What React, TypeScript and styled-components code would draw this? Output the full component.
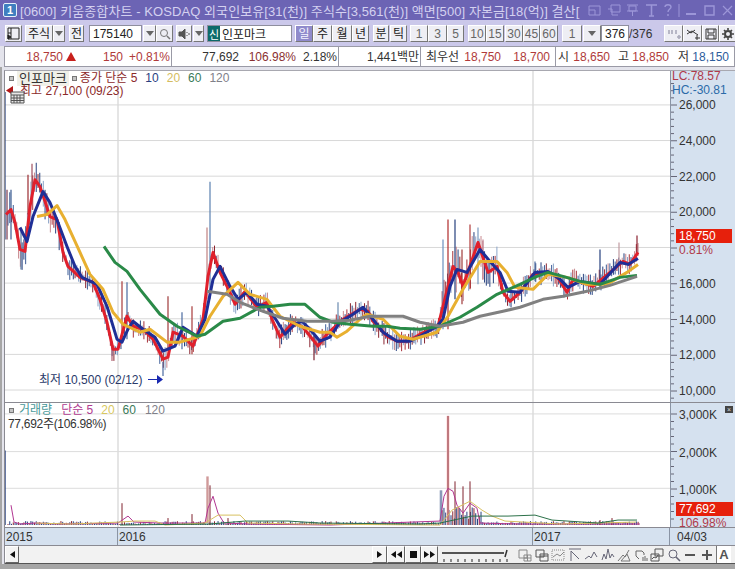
import React from "react"
import styled, { createGlobalStyle } from "styled-components"

const SANS = `"Liberation Sans", "Noto Sans CJK KR", sans-serif`

type Pt = [number, number]

const RED: Pt[] = [[6,215],[11,210],[15,223],[20,250],[25,252],[30,207],[35,180],[40,187],[50,217],[57,220],[63,253],[68,267],[80,278],[93,283],[100,300],[107,323],[113,350],[118,350],[127,317],[133,327],[143,330],[153,340],[163,360],[168,358],[173,333],[183,337],[193,347],[203,320],[208,277],[213,253],[220,273],[230,293],[235,305],[245,292],[257,308],[267,303],[272,320],[280,338],[293,323],[303,328],[318,347],[327,335],[343,320],[360,310],[368,312],[373,322],[387,337],[397,342],[408,342],[420,335],[438,327],[443,307],[453,267],[458,273],[463,287],[478,243],[488,273],[497,267],[503,293],[510,302],[520,293],[533,275],[547,273],[557,277],[567,293],[573,280],[593,287],[610,273],[623,262],[630,265],[638,253]]
const BLUE: Pt[] = [[20,228],[27,242],[33,217],[43,192],[50,203],[58,223],[67,247],[75,267],[82,278],[97,285],[107,307],[117,340],[122,343],[128,330],[133,322],[143,330],[155,338],[163,352],[175,347],[183,328],[197,337],[205,320],[213,280],[220,267],[230,287],[238,300],[247,293],[257,305],[267,307],[277,322],[285,335],[295,325],[302,322],[310,330],[320,342],[330,338],[340,323],[353,315],[363,308],[373,320],[383,333],[397,342],[410,342],[420,337],[437,327],[443,320],[450,287],[457,270],[467,273],[480,250],[490,262],[500,273],[508,292],[520,293],[535,273],[548,272],[560,280],[568,288],[580,282],[600,285],[620,263],[628,265],[638,259]]
const YELLOW: Pt[] = [[37,217],[47,215],[57,206],[65,220],[80,253],[90,275],[103,290],[113,313],[123,325],[140,333],[150,330],[167,343],[180,343],[200,337],[210,317],[223,297],[238,283],[250,295],[267,300],[280,317],[300,327],[320,333],[330,333],[337,338],[347,332],[360,320],[367,315],[383,320],[400,337],[413,340],[420,338],[437,333],[448,317],[463,290],[480,262],[497,262],[507,273],[515,288],[533,290],[548,275],[567,278],[587,285],[607,285],[627,273],[638,265]]
const GREEN: Pt[] = [[104,247],[115,263],[127,272],[140,290],[160,315],[177,327],[197,337],[205,335],[223,322],[240,319],[260,308],[273,307],[290,305],[305,305],[320,318],[333,323],[350,325],[373,327],[387,327],[400,329],[420,330],[440,327],[460,318],[477,308],[497,295],[520,285],[537,277],[548,273],[563,277],[580,282],[600,285],[620,278],[637,276]]
const GRAY: Pt[] = [[207,292],[227,295],[240,303],[263,312],[283,319],[307,322],[330,322],[350,321],[370,317],[403,317],[420,323],[440,327],[463,323],[480,317],[503,312],[520,308],[543,300],[563,297],[587,292],[610,286],[637,277]]

const SPIKES: [number, number, number, string][] = [
  [5,92,240,"#26407e"],[7,190,240,"#7a3a50"],[11,190,240,"#3a5a90"],[32,164,200,"#a05060"],[28,175,215,"#9a2a30"],[21,232,270,"#5a7aa0"],
  [122,282,340,"#a83a3a"],[127,283,340,"#4a6aa0"],[168,297,350,"#a03a3a"],[192,307,355,"#a83a3a"],[182,313,350,"#4a6aa0"],[163,363,377,"#4a6aa0"],
  [112,345,362,"#b06070"],[210,182,300,"#5a80b0"],[207,228,300,"#c08080"],[314,337,361,"#7a2030"],[338,303,325,"#6a8ab0"],
  [443,240,330,"#6a90c0"],[448,220,330,"#b02a2a"],[455,220,300,"#26407e"],[462,250,305,"#a03a3a"],[470,225,290,"#b03a3a"],[478,228,285,"#7a9ac0"],[483,240,280,"#c08090"],
  [535,262,282,"#4a6aa0"],[600,250,290,"#26407e"],[619,243,265,"#c09aa0"],[637,236,255,"#8a2030"],
]

const at = (line: Pt[], x: number) => {
  for (let i = 1; i < line.length; i++) {
    if (x <= line[i][0]) {
      const [a, b] = [line[i - 1], line[i]]
      return a[1] + ((b[1] - a[1]) * (x - a[0])) / (b[0] - a[0] || 1)
    }
  }
  return line[line.length - 1][1]
}
const rnd = (i: number) => {
  const v = Math.sin(i * 12.9898) * 43758.5453
  return v - Math.floor(v)
}
const pts = (line: Pt[]) => line.map(p => p.join(",")).join(" ")

const WICK_COLORS = ["#a83038", "#3c5c98", "#c88a90", "#8aa4c8", "#8a2430", "#26407e"]
const wicks = Array.from({ length: 358 }, (_, i) => {
  const x = 8 + i * 1.765
  const y = at(RED, x)
  const amp = x > 440 && x < 500 ? 22 : x < 60 ? 18 : 10
  return {
    x,
    y1: y - 2 - rnd(i) * amp,
    y2: y + 2 + rnd(i + 500) * amp,
    c: WICK_COLORS[Math.floor(rnd(i + 900) * 6)],
  }
})
const volBars = Array.from({ length: 358 }, (_, i) => {
  const x = 8 + i * 1.765
  const tall = x > 441 && x < 482
  return {
    x,
    top: 527 - (tall ? 6 + rnd(i) * 12 : 1 + rnd(i) * 3),
    c: i % 3 === 0 ? "#8a2430" : "#26407e",
  }
})

const PRICES = [26000, 24000, 22000, 20000, 18000, 16000, 14000, 12000, 10000]
const priceY = (p: number) => 105 + ((26000 - p) * 35.75) / 2000

const GlobalStyle = createGlobalStyle`
  html, body { margin: 0; padding: 0; background: #a8a8a8; overflow: hidden; }
  * { box-sizing: border-box; }
`

const Page = styled.div`
  width: 735px;
  height: 569px;
  display: flex;
  flex-direction: column;
  font-family: ${SANS};
  background: #e4e4ec;
  border-bottom: 5px solid #a6a6a6;
  overflow: hidden;
`
const TitleBar = styled.div`
  height: 20px;
  background: #6c64b4;
  display: flex;
  align-items: center;
  padding-left: 3px;
  color: #d4d1f0;
  font-size: 13px;
  flex: none;
`
const AppBadge = styled.div`
  width: 14px;
  height: 14px;
  background: #3f7fc0;
  border: 1px solid #e6f0fa;
  border-radius: 2px;
  color: #fff;
  font: bold 11px ${SANS};
  line-height: 12px;
  text-align: center;
  margin-right: 3px;
`
const TitleText = styled.div`
  width: 566px;
  white-space: nowrap;
  overflow: hidden;
  letter-spacing: 0.08px;
`
const TitleIcons = styled.div`
  display: flex;
  align-items: center;
  gap: 4px;
  margin-left: 4px;
`
const Toolbar = styled.div`
  height: 26px;
  background: #cbc8ea;
  display: flex;
  align-items: center;
  padding: 1px 0 0 5px;
  font-size: 12px;
  color: #222;
  flex: none;
`
const Btn = styled.div<{ $w: number; $ml?: number; $active?: boolean; $dim?: boolean }>`
  width: ${p => p.$w}px;
  height: 17px;
  margin-left: ${p => p.$ml ?? 0}px;
  flex: none;
  display: flex;
  align-items: center;
  justify-content: center;
  background: ${p => (p.$active ? "#8f8acb" : "#eeeef4")};
  color: ${p => (p.$active ? "#f4f4ff" : p.$dim ? "#666" : "#222")};
  border: 1px solid #fff;
  border-right-color: #777;
  border-bottom-color: #777;
  font-size: 12px;
  line-height: 1;
`
const Field = styled.div<{ $w: number; $ml?: number }>`
  width: ${p => p.$w}px;
  height: 17px;
  margin-left: ${p => p.$ml ?? 0}px;
  flex: none;
  display: flex;
  align-items: center;
  background: #fff;
  border: 1px solid #8e8e9e;
  padding-left: 3px;
  font-size: 12px;
  color: #222;
  overflow: hidden;
`
const NewBadge = styled.span`
  width: 12px;
  height: 15px;
  margin: 0 2px 0 -3px;
  background: #0c6a6a;
  color: #fff;
  font-size: 11px;
  display: flex;
  align-items: center;
  justify-content: center;
`
const TotalText = styled.span`
  width: 26px;
  flex: none;
  color: #333;
  font-size: 12px;
`
const InfoRow = styled.div`
  height: 21px;
  background: #fff;
  border: 1px solid #9a9aa6;
  margin-left: 4px;
  display: flex;
  align-items: center;
  font-size: 12px;
  flex: none;
`
const InfoCell = styled.div<{ $w: number; $c?: string; $sep?: boolean }>`
  width: ${p => p.$w}px;
  height: 100%;
  flex: none;
  line-height: 20px;
  text-align: right;
  color: ${p => p.$c ?? "#333"};
  white-space: nowrap;
  border-right: ${p => (p.$sep ? "1px solid #9a9aa6" : "none")};
`
const Content = styled.div`
  flex: 1;
  min-height: 0;
  display: flex;
  border-left: 2px solid #a6a6a6;
  padding: 3px 0 0 2px;
`
const Panels = styled.div`
  flex: 1;
  display: flex;
  flex-direction: column;
  border-left: 1px solid #8a8a92;
  border-top: 1px solid #a8a8b0;
  background: #fff;
  min-width: 0;
`
const ChartRow = styled.div<{ $h: number }>`
  height: ${p => p.$h}px;
  display: flex;
  flex: none;
  border-bottom: 1px solid #8a8a92;
`
const Plot = styled.div`
  position: relative;
  width: 665px;
  flex: none;
`
const ChartSvg = styled.svg`
  display: block;
  width: 100%;
  height: 100%;
`
const Legend = styled.div`
  position: absolute;
  left: 1px;
  top: 0;
  height: 14px;
  display: flex;
  align-items: center;
  font-size: 12px;
  line-height: 14px;
  white-space: nowrap;
`
const LegendBox = styled.span`
  width: 5px;
  height: 5px;
  background: #c4c4c4;
  border: 1px solid #777;
  margin: 0 3px;
  flex: none;
`
const LegendName = styled.span`
  background: #f0f0e8;
  color: #333;
  font-size: 13px;
  padding: 0 2px;
  height: 15px;
  line-height: 15px;
`
const LegendText = styled.span<{ $c: string; $ml?: number }>`
  color: ${p => p.$c};
  margin-left: ${p => p.$ml ?? 0}px;
`
const Note = styled.div<{ $x: number; $y: number; $c: string; $tight?: boolean }>`
  position: absolute;
  left: ${p => p.$x}px;
  top: ${p => p.$y}px;
  font-size: 12px;
  line-height: 14px;
  letter-spacing: ${p => (p.$tight ? "-0.3px" : "0")};
  color: ${p => p.$c};
  white-space: nowrap;
`
const Marker = styled.svg<{ $x: number; $y: number }>`
  position: absolute;
  left: ${p => p.$x}px;
  top: ${p => p.$y}px;
`
const Axis = styled.div`
  position: relative;
  flex: 1;
  background: #d5e1ef;
  border-left: 1px solid #8a94a4;
  font-size: 12px;
  color: #333;
`
const AxisTicks = styled.svg`
  position: absolute;
  left: 0;
  top: 0;
`
const AxisLabel = styled.div<{ $y: number; $c?: string; $x?: number }>`
  position: absolute;
  left: ${p => p.$x ?? 8}px;
  top: ${p => p.$y}px;
  line-height: 14px;
  color: ${p => p.$c ?? "#333"};
  white-space: nowrap;
`
const Badge = styled.div<{ $y: number; $w: number }>`
  position: absolute;
  left: 5px;
  top: ${p => p.$y}px;
  width: ${p => p.$w}px;
  height: 14px;
  padding-left: 3px;
  line-height: 14px;
  background: #e6200c;
  color: #fff;
`
const CloseMark = styled.div`
  position: absolute;
  right: 2px;
  top: 3px;
  width: 8px;
  height: 7px;
  background: #444;
  color: #ddd;
  font-size: 7px;
  line-height: 7px;
  text-align: center;
`
const DateRow = styled.div`
  height: 18px;
  flex: none;
  background: #d5e1ef;
  display: flex;
  font-size: 12px;
  color: #333;
  border-bottom: 1px solid #8a8a92;
`
const DateCell = styled.div<{ $w: number; $last?: boolean }>`
  width: ${p => p.$w}px;
  flex: ${p => (p.$last ? 1 : "none")};
  padding-left: ${p => (p.$last ? 7 : 1)}px;
  line-height: 18px;
  border-right: ${p => (p.$last ? "none" : "1px solid #8a94a4")};
`
const BottomBar = styled.div`
  flex: 1;
  display: flex;
  align-items: center;
  background: #f0f0f0;
  border-bottom: 1px solid #555;
`
const ScrollBtn = styled.div<{ $w: number }>`
  width: ${p => p.$w}px;
  height: 100%;
  flex: none;
  display: flex;
  align-items: center;
  justify-content: center;
  background: #f4f4f4;
  border: 1px solid #fff;
  border-right-color: #666;
  border-bottom-color: #666;
`
const Track = styled.div`
  width: 353px;
  height: 100%;
  flex: none;
  background: #f2f2f2;
`
const Slider = styled.svg`
  margin: 0 7px 0 3px;
  flex: none;
`
const BottomIcons = styled.div`
  display: flex;
  align-items: center;
  gap: 2.5px;
  height: 100%;
`
const AButton = styled.div`
  width: 15px;
  height: 100%;
  background: #fff;
  border-left: 1px solid #777;
  color: #555;
  font: bold 13px ${SANS};
  text-align: center;
  line-height: 17px;
`

const Glyph = ({ w = 14, h = 14, s = "#333", children }: { w?: number; h?: number; s?: string; children: React.ReactNode }) => (
  <svg width={w} height={h} viewBox={`0 0 ${w} ${h}`} fill="none" stroke={s} strokeWidth="1" style={{ flex: "none" }}>
    {children}
  </svg>
)
const Caret = () => (
  <svg width="8" height="5" viewBox="0 0 8 5"><path d="M0 0h8L4 5z" fill="#666" /></svg>
)

const Prices = () => (
  <ChartSvg viewBox="5 71 665 332" preserveAspectRatio="none">
    <line x1="118" y1="71" x2="118" y2="403" stroke="#dcdcdc" strokeWidth="1.5" />
    <line x1="533" y1="71" x2="533" y2="403" stroke="#dcdcdc" strokeWidth="1.5" />
    {PRICES.map(p => (
      <line key={p} x1="5" x2="670" y1={priceY(p)} y2={priceY(p)} stroke="#d8d8d8" strokeWidth="1" />
    ))}
    {wicks.map((w, i) => (
      <line key={i} x1={w.x} x2={w.x} y1={w.y1} y2={w.y2} stroke={w.c} strokeWidth="1" />
    ))}
    {SPIKES.map((s, i) => (
      <line key={i} x1={s[0]} x2={s[0]} y1={s[1]} y2={s[2]} stroke={s[3]} strokeWidth="1.2" />
    ))}
    <polyline points={pts(RED)} fill="none" stroke="#e0202c" strokeWidth="3" strokeLinejoin="round" />
    <polyline points={pts(BLUE)} fill="none" stroke="#1f2f96" strokeWidth="3" strokeLinejoin="round" />
    <polyline points={pts(YELLOW)} fill="none" stroke="#e8b030" strokeWidth="3" strokeLinejoin="round" />
    <polyline points={pts(GREEN)} fill="none" stroke="#2a8a48" strokeWidth="3" strokeLinejoin="round" />
    <polyline points={pts(GRAY)} fill="none" stroke="#808080" strokeWidth="3" strokeLinejoin="round" />
  </ChartSvg>
)

const Volumes = () => (
  <ChartSvg viewBox="5 404 665 125" preserveAspectRatio="none">
    <line x1="118" y1="404" x2="118" y2="529" stroke="#dcdcdc" strokeWidth="1.5" />
    <line x1="533" y1="404" x2="533" y2="529" stroke="#dcdcdc" strokeWidth="1.5" />
    {[415, 453, 490].map(y => (
      <line key={y} x1="5" x2="670" y1={y} y2={y} stroke="#dcdcdc" strokeWidth="1" />
    ))}
    {volBars.map((b, i) => (
      <line key={i} x1={b.x} x2={b.x} y1={b.top} y2="527" stroke={b.c} strokeWidth="1" />
    ))}
    <line x1="5" x2="5" y1="452" y2="527" stroke="#26407e" strokeWidth="1.4" />
    <line x1="207.5" x2="207.5" y1="478" y2="525" stroke="#d09a9a" strokeWidth="2.4" />
    <line x1="441" x2="441" y1="492" y2="525" stroke="#8a9ab8" strokeWidth="2.6" />
    <line x1="448" x2="448" y1="417" y2="527" stroke="#ffd0d0" strokeWidth="3" />
    {[[448,417],[455,483],[463,488],[470,483],[122,505],[192,516],[210,487],[612,520],[600,522],[168,520],[228,520]].map(([x, y]) => (
      <line key={x} x1={x} x2={x} y1={y} y2="527" stroke="#80202c" strokeWidth="1" />
    ))}
    <polyline points="11,507 14,524 20,526 35,525 60,526 118,525 128,518 134,524 160,525 205,525 208,510 213,498 218,515 224,525 250,526 330,527 440,523 444,498 448,490 453,493 457,507 463,515 470,505 477,510 480,525 520,526 640,526" fill="none" stroke="#b03490" strokeWidth="1" />
    <polyline points="36,525 70,526 120,524 135,523 155,523 165,527 205,525 218,517 240,517 248,525 300,526 440,527 452,512 470,503 482,512 492,518 505,523 560,526 636,524" fill="none" stroke="#d8c060" strokeWidth="1" />
    <polyline points="120,527 210,526 245,523 288,523 320,525 420,526 440,525 472,518 508,518 535,517 552,522 598,525 618,522 637,522" fill="none" stroke="#2a7048" strokeWidth="1" />
  </ChartSvg>
)

const PriceTicks = () => (
  <AxisTicks width="64" height="332">
    {Array.from({ length: 46 }, (_, i) => {
      const y = 34 + (i * 35.75) / 5 - 7.15 * 3
      const major = (i - 3) % 5 === 0
      return <line key={i} x1="0" x2={major ? 6 : 3} y1={y} y2={y} stroke="#667" strokeWidth="1" />
    })}
  </AxisTicks>
)
const VolumeTicks = () => (
  <AxisTicks width="64" height="124">
    {Array.from({ length: 15 }, (_, i) => {
      const y = 11 + (i * 37.5) / 5
      const major = i % 5 === 0
      return <line key={i} x1="0" x2={major ? 6 : 3} y1={y} y2={y} stroke="#667" strokeWidth="1" />
    })}
  </AxisTicks>
)

export default function App() {
  return (
    <>
      <GlobalStyle />
      <Page>
        <TitleBar>
          <AppBadge>1</AppBadge>
          <TitleText>[0600] 키움종합차트 - KOSDAQ 외국인보유[31(천)] 주식수[3,561(천)] 액면[500] 자본금[18(억)] 결산[</TitleText>
          <TitleIcons>
            <Glyph w={15} s="#9c96d8"><path d="M2 3h11v9H2zM2 7h6v5" /></Glyph>
            <Glyph w={15} s="#9c96d8"><path d="M5 2h9v7H5zM2 6h4v6h6" /></Glyph>
            <Glyph w={15} s="#9c96d8"><path d="M2 2h11M4 3h7v5H4zM2 8h11M7.500 8v5" /></Glyph>
            <Glyph w={15} s="#9c96d8"><path d="M2 2h11M7.500 2v11M5 13h5" strokeWidth="1.6" /></Glyph>
            <Glyph w={10} s="#9c96d8"><path d="M2 4c0-3 6-3 6 0 0 2-3 2-3 5M5 11v2" strokeWidth="1.4" /></Glyph>
            <Glyph w={4} s="#9c96d8"><path d="M2 1v13" /></Glyph>
            <Glyph s="#9c96d8"><path d="M1 11h10" strokeWidth="2" /></Glyph>
            <Glyph s="#9c96d8"><path d="M2 3h9v9H2z" strokeWidth="1.4" /></Glyph>
            <Glyph s="#9c96d8"><path d="M2 3l9 9M11 3l-9 9" strokeWidth="1.2" /></Glyph>
          </TitleIcons>
        </TitleBar>

        <Toolbar>
          <Btn $w={17}>
            <Glyph w={13} h={13} s="#222"><path d="M1 1h11v11H1zM4 1v11M1 6h3" /><path d="M1 8l3 2-3 2z" fill="#222" /></Glyph>
          </Btn>
          <Btn $w={28} $ml={3}>주식</Btn>
          <Btn $w={12} $ml={0}><Caret /></Btn>
          <Btn $w={15} $ml={4}>전</Btn>
          <Field $w={53} $ml={5}>175140</Field>
          <Btn $w={13} $ml={1}><Caret /></Btn>
          <Btn $w={17} $ml={0}>
            <Glyph w={12} h={12} s="#777"><circle cx="5" cy="5" r="3.5" /><path d="M8 8l3 3" strokeWidth="1.5" /></Glyph>
          </Btn>
          <Btn $w={16} $ml={3}>
            <Glyph w={12} h={12} s="#555"><path d="M1 4h3l3-3v10L4 8H1z" fill="#555" /><path d="M9 4v1M9 7v1M11 5v2" /></Glyph>
          </Btn>
          <Btn $w={11} $ml={1}><Caret /></Btn>
          <Field $w={85} $ml={3}><NewBadge>신</NewBadge>인포마크</Field>
          <Btn $w={18} $ml={3} $active>일</Btn>
          <Btn $w={19}>주</Btn>
          <Btn $w={20}>월</Btn>
          <Btn $w={17}>년</Btn>
          <Btn $w={16} $ml={4}>분</Btn>
          <Btn $w={17} $ml={1}>틱</Btn>
          <Btn $w={18} $ml={3} $dim>1</Btn>
          <Btn $w={19} $dim>3</Btn>
          <Btn $w={17} $dim>5</Btn>
          <Btn $w={18} $ml={4} $dim>10</Btn>
          <Btn $w={18} $dim>15</Btn>
          <Btn $w={18} $ml={1} $dim>30</Btn>
          <Btn $w={17} $dim>45</Btn>
          <Btn $w={18} $dim>60</Btn>
          <Btn $w={20} $ml={4} $dim>1</Btn>
          <Btn $w={18} $ml={1}><Caret /></Btn>
          <Field $w={28}>376</Field>
          <TotalText>/376</TotalText>
          <Btn $w={19} $ml={9}>
            <Glyph w={14} h={12} s="#aab"><path d="M2 2v4M5 2v4M9 2v4M10 9h4M12 7v4" strokeWidth="1.6" /></Glyph>
          </Btn>
          <Btn $w={19}>
            <Glyph w={14} h={12} s="#333"><path d="M1 2l4 3 4-3M1 6l5-3 6 4M11 7v5M9 10h5" /></Glyph>
          </Btn>
          <Btn $w={17}>
            <Glyph w={12} h={12} s="#333"><path d="M1 1h10v10H1zM3 1v4h6V1M3 11V7h6v4" /></Glyph>
          </Btn>
          <Btn $w={17}>
            <Glyph w={12} h={12} s="#444"><circle cx="6" cy="6" r="3" strokeWidth="2" /><path d="M6 0v2M6 10v2M0 6h2M10 6h2M2 2l1.4 1.4M8.6 8.6L10 10M2 10l1.4-1.4M8.6 3.4L10 2" strokeWidth="1.6" /></Glyph>
          </Btn>
        </Toolbar>

        <InfoRow>
          <InfoCell $w={58} $c="#b03a3a">18,750</InfoCell>
          <InfoCell $w={13}>
            <svg width="10" height="9" viewBox="0 0 10 9"><path d="M5 0l5 9H0z" fill="#c8201c" /></svg>
          </InfoCell>
          <InfoCell $w={47} $c="#b03a3a">150</InfoCell>
          <InfoCell $w={47} $c="#b03a3a">+0.81%</InfoCell>
          <InfoCell $w={2} $sep />
          <InfoCell $w={67} $c="#333">77,692</InfoCell>
          <InfoCell $w={57} $c="#8a3030">106.98%</InfoCell>
          <InfoCell $w={41} $c="#333">2.18%</InfoCell>
          <InfoCell $w={2} $sep />
          <InfoCell $w={80}>1,441백만</InfoCell>
          <InfoCell $w={2} $sep />
          <InfoCell $w={38} $c="#333">최우선</InfoCell>
          <InfoCell $w={42} $c="#b03a3a">18,750</InfoCell>
          <InfoCell $w={49} $c="#b03a3a">18,700</InfoCell>
          <InfoCell $w={6} $sep />
          <InfoCell $w={13}>시</InfoCell>
          <InfoCell $w={41} $c="#b03a3a">18,650</InfoCell>
          <InfoCell $w={19}>고</InfoCell>
          <InfoCell $w={40} $c="#b03a3a">18,850</InfoCell>
          <InfoCell $w={20}>저</InfoCell>
          <InfoCell $w={40} $c="#2c5c9c">18,150</InfoCell>
        </InfoRow>

        <Content>
          <Panels>
            <ChartRow $h={332}>
              <Plot>
                <Prices />
                <Legend>
                  <LegendBox />
                  <LegendName>인포마크</LegendName>
                  <LegendBox />
                  <LegendText $c="#8c2a2a">종가 단순 5</LegendText>
                  <LegendText $c="#2a4080" $ml={8}>10</LegendText>
                  <LegendText $c="#d4bc60" $ml={8}>20</LegendText>
                  <LegendText $c="#3a7a58" $ml={8}>60</LegendText>
                  <LegendText $c="#808088" $ml={8}>120</LegendText>
                </Legend>
                <Note $x={15} $y={13} $c="#8c2a2a">최고 27,100 (09/23)</Note>
                <Marker $x={1} $y={15} width="8" height="9"><path d="M0 4.5L7 0v9z" fill="#b01818" /></Marker>
                <Marker $x={5} $y={20} width="15" height="13">
                  <path d="M1 1h13v11H1zM1 4h13M4 4v8M7 4v8M10 4v8M1 7h13M1 9.500h13" fill="#e8e8e8" stroke="#555" strokeWidth="1" />
                </Marker>
                <Note $x={34} $y={302} $c="#2a3a6a">최저 10,500 (02/12)</Note>
                <Marker $x={143} $y={303} width="16" height="11">
                  <path d="M0 5.500h10" stroke="#1a2ab0" strokeWidth="1" /><path d="M9 1l6 4.500-6 4.500z" fill="#1a2ab0" />
                </Marker>
              </Plot>
              <Axis>
                <PriceTicks />
                <AxisLabel $y={-2} $x={1} $c="#b03a4a">LC:78.57</AxisLabel>
                <AxisLabel $y={12} $x={1} $c="#2a6aa8">HC:-30.81</AxisLabel>
                {PRICES.filter(p => p !== 18000).map(p => (
                  <AxisLabel key={p} $y={priceY(p) - 71 - 7}>{p.toLocaleString("en-US")}</AxisLabel>
                ))}
                <Badge $y={158} $w={56}>18,750</Badge>
                <AxisLabel $y={172} $c="#b03a4a">0.81%</AxisLabel>
              </Axis>
            </ChartRow>
            <ChartRow $h={125}>
              <Plot>
                <Volumes />
                <Legend>
                  <LegendBox />
                  <LegendText $c="#4a9a9a" $ml={2}>거래량</LegendText>
                  <LegendText $c="#b03a90" $ml={9}>단순 5</LegendText>
                  <LegendText $c="#d8c860" $ml={8}>20</LegendText>
                  <LegendText $c="#3a7a58" $ml={8}>60</LegendText>
                  <LegendText $c="#808088" $ml={9}>120</LegendText>
                </Legend>
                <Note $x={3} $y={14} $c="#333" $tight>77,692주(106.98%)</Note>
              </Plot>
              <Axis>
                <VolumeTicks />
                <CloseMark>×</CloseMark>
                <AxisLabel $y={5}>3,000K</AxisLabel>
                <AxisLabel $y={43}>2,000K</AxisLabel>
                <AxisLabel $y={80}>1,000K</AxisLabel>
                <Badge $y={99} $w={57}>77,692</Badge>
                <AxisLabel $y={113} $c="#b03a4a">106.98%</AxisLabel>
              </Axis>
            </ChartRow>
            <DateRow>
              <DateCell $w={113}>2015</DateCell>
              <DateCell $w={415}>2016</DateCell>
              <DateCell $w={137}>2017</DateCell>
              <DateCell $w={65} $last>04/03</DateCell>
            </DateRow>
            <BottomBar>
              <ScrollBtn $w={14}><svg width="5" height="7"><path d="M5 0v7L0 3.500z" fill="#111" /></svg></ScrollBtn>
              <Track />
              <ScrollBtn $w={15}><svg width="5" height="7"><path d="M0 0v7l5-3.500z" fill="#111" /></svg></ScrollBtn>
              <ScrollBtn $w={18}><svg width="11" height="7"><path d="M5 0v7L0 3.500zM11 0v7L6 3.500z" fill="#111" /></svg></ScrollBtn>
              <ScrollBtn $w={16}><svg width="7" height="7"><path d="M0 0h7v7H0z" fill="#111" /></svg></ScrollBtn>
              <ScrollBtn $w={17}><svg width="11" height="7"><path d="M0 0v7l5-3.500zM6 0v7l5-3.500z" fill="#111" /></svg></ScrollBtn>
              <Slider width="70" height="16">
                <path d="M1 6h62" stroke="#555" strokeWidth="2" />
                <path d="M66 3l-2 7" stroke="#333" strokeWidth="1.500" />
                <path d="M3 12v3M10 12v3M17 12v3M24 12v3M31 12v3M38 12v3M45 12v3M52 12v3M59 12v3M66 12v3" stroke="#222" strokeWidth="1" />
              </Slider>
              <BottomIcons>
                <Glyph s="#888"><path d="M1 2h8v8H1zM6 7h7v6H6zM9.500 7v6M6 10h7" /></Glyph>
                <Glyph s="#555"><path d="M1 2h8v7H1zM5 6h8v7H5zM5 8h8" /></Glyph>
                <Glyph s="#888"><path d="M1 2h12v10H1z" strokeDasharray="1 1" /><path d="M2 9l4-3 3 2 4-4" /></Glyph>
                <Glyph s="#667"><path d="M1 1h12M3 13V3l5 5M3 3l8 8" /></Glyph>
                <Glyph s="#667"><path d="M1 11l4-3 2 2 3-6 3 5" /></Glyph>
                <Glyph s="#667"><path d="M1 12l2-6 2 5 2-10 2 9 2-4 2 3" /></Glyph>
                <Glyph s="#777"><path d="M1 13l5-6 2 2 4-7M4 13l6-7 3 7z" /></Glyph>
                <Glyph s="#666"><path d="M2 8V3h6l2 2v2M2 8l3 3M9 9v4M11 8v5M13 10v3" /></Glyph>
                <Glyph s="#555"><path d="M5 1h8v7H5zM1 6h8v7H1zM2 11l2-2 2 1 2-3" /></Glyph>
                <Glyph s="#667"><circle cx="6" cy="6" r="4" /><path d="M9 9l4 4" strokeWidth="1.6" /></Glyph>
                <Glyph s="#555"><path d="M2 7h10" strokeWidth="2" /></Glyph>
                <Glyph s="#555"><path d="M2 7h10M7 2v10" strokeWidth="2" /></Glyph>
                <AButton>A</AButton>
              </BottomIcons>
            </BottomBar>
          </Panels>
        </Content>
      </Page>
    </>
  )
}
